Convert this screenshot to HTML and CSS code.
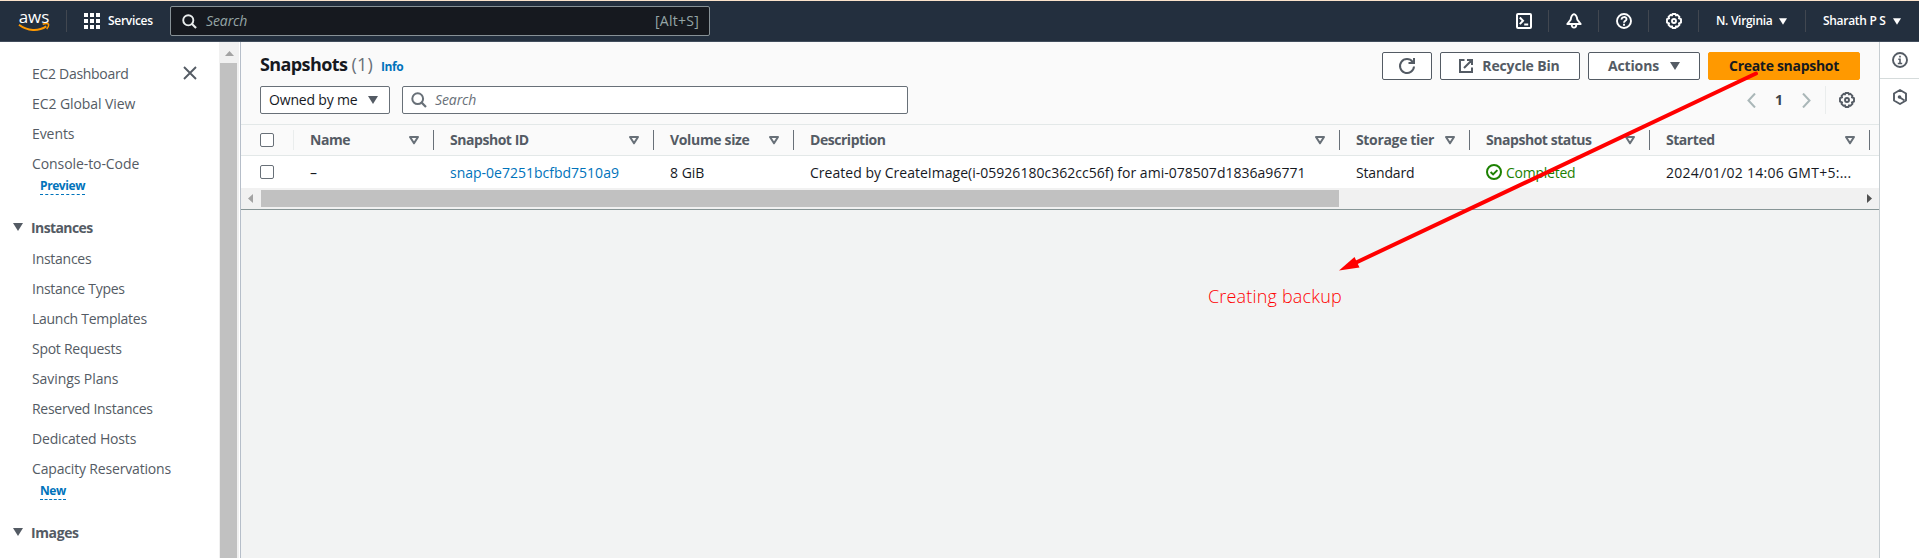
FILE: index.html
```
<!DOCTYPE html>
<html lang="en">
<head>
<meta charset="utf-8">
<title>Snapshots | EC2</title>
<link rel="stylesheet" href="styles.css">
</head>
<body>
<svg width="0" height="0" class="defs">
  <symbol id="gear" viewBox="0 0 16 16"><path d="M6.500 1h3l.5 1.400 1.400-.6 2.100 2.100-.6 1.500 2.100.8v3.400l-2.100.8.6 1.400-2.100 2.100-1.400-.6-.5 1.700h-3L6 13.300l-1.400.6-2.100-2.100.6-1.400L1 9.600V6.200l2.100-.8-.6-1.500 2.100-2.100 1.400.6z" fill="none" stroke="currentColor" stroke-width="1.900" stroke-linejoin="round"/><circle cx="8" cy="8" r="2" fill="none" stroke="currentColor" stroke-width="1.900"/></symbol>
  <symbol id="search" viewBox="0 0 16 16"><circle cx="6.700" cy="6.700" r="5.400" fill="none" stroke="currentColor" stroke-width="2"/><path d="M10.400 10.400l4.600 4.600" stroke="currentColor" stroke-width="2.200"/></symbol>
  <symbol id="caret" viewBox="0 0 10 8"><path d="M0 0h10L5 8z" fill="currentColor"/></symbol>
  <symbol id="sort" viewBox="0 0 10 9"><path d="M1 1h8L5 7.300z" fill="none" stroke="currentColor" stroke-width="2" stroke-linejoin="round"/></symbol>
</svg>

<header class="topbar">
  <div class="aws">
    <span class="aws-word">aws</span>
    <svg class="aws-smile" width="32" height="9" viewBox="0 0 32 9"><path d="M1 1.800C9.500 8.300 20.500 8.600 28.300 3.400" fill="none" stroke="#f90" stroke-width="2"/><path d="M24.700 1.300C27 .4 29.600.4 30.500 1.100 30.900 2.500 30 4.600 28.700 6" fill="none" stroke="#f90" stroke-width="1.500"/></svg>
  </div>
  <i class="bar"></i>
  <svg class="grid" width="16" height="16" viewBox="0 0 16 16"><path fill="#fff" d="M0 0h4v4H0zM6 0h4v4H6zM12 0h4v4h-4zM0 6h4v4H0zM6 6h4v4H6zM12 6h4v4h-4zM0 12h4v4H0zM6 12h4v4H6zM12 12h4v4h-4z"/></svg>
  <span class="services">Services</span>
  <div class="global-search">
    <svg width="15" height="15"><use href="#search"/></svg>
    <em>Search</em><span>[Alt+S]</span>
  </div>
  <nav class="tools">
    <span class="tool"><svg width="16" height="16" viewBox="0 0 16 16" fill="none" stroke="#fff" stroke-width="2"><rect x="1" y="1" width="14" height="14" rx="1"/><path d="M3.800 4.500L7 7.800l-3.200 3.300M8.200 11.600h4"/></svg></span>
    <span class="tool"><svg width="16" height="16" viewBox="0 0 16 16" fill="none" stroke="#fff" stroke-width="1.900" stroke-linejoin="round"><path d="M8 1.200C5.800 2 5 3.600 4.700 6.600L1.300 11h13.400l-3.400-4.400C11 3.600 10.200 2 8 1.200zM5.700 11.500c0 4.200 4.600 4.200 4.600 0"/></svg></span>
    <span class="tool"><svg width="16" height="16" viewBox="0 0 16 16" fill="none" stroke="#fff" stroke-width="1.900"><circle cx="8" cy="8" r="7"/><path d="M5.600 6.600C5.400 3.300 10.600 3.300 10.500 6.200 10.400 7.900 8 7.700 8 9.800M8 10.800v1.900"/></svg></span>
    <span class="tool"><svg width="16" height="16"><use href="#gear"/></svg></span>
    <span class="menu region">N. Virginia<svg width="8" height="7"><use href="#caret"/></svg></span>
    <span class="menu user">Sharath P S<svg width="8" height="7"><use href="#caret"/></svg></span>
  </nav>
</header>

<div class="shell">
  <aside class="side">
    <svg class="close" width="14" height="14" viewBox="0 0 14 14"><path d="M1 1l12 12M13 1L1 13" stroke="#545b64" stroke-width="1.900"/></svg>
    <ul>
      <li class="n1">EC2 Dashboard</li><li class="n0">EC2 Global View</li><li class="n0">Events</li><li class="n0">Console-to-Code</li>
    </ul>
    <span class="tag">Preview</span>
    <h3><svg width="10" height="8"><use href="#caret"/></svg>Instances</h3>
    <ul>
      <li>Instances</li><li>Instance Types</li><li>Launch Templates</li><li>Spot Requests</li><li class="n0">Savings Plans</li><li>Reserved Instances</li><li class="n2">Dedicated Hosts</li><li class="n2">Capacity Reservations</li>
    </ul>
    <span class="tag">New</span>
    <h3 class="images"><svg width="10" height="8"><use href="#caret"/></svg>Images</h3>
  </aside>
  <div class="vscroll"><svg width="9" height="5" viewBox="0 0 9 5"><path d="M0 5h9L4.500 0z" fill="#a3a3a3"/></svg><div class="vthumb"></div></div>

  <main class="main">
    <section class="panel">
      <div class="head">
        <h1>Snapshots <span>(1)</span></h1><a class="info">Info</a>
        <div class="actions">
          <button class="btn refresh"><svg width="18" height="18" viewBox="0 0 18 18" fill="none" stroke="#545b64" stroke-width="2"><path d="M16 9.500A7 7 0 1 1 14.600 4.800M16 1v5h-5.500"/></svg></button>
          <button class="btn bin"><svg width="14" height="14" viewBox="0 0 14 14" fill="none" stroke="#545b64" stroke-width="2"><path d="M5.500 1H1v12h12V8.500M8 1h5v5M13 1L5 9"/></svg>Recycle Bin</button>
          <button class="btn act">Actions<svg width="10" height="8"><use href="#caret"/></svg></button>
          <button class="btn create">Create snapshot</button>
        </div>
      </div>
      <div class="filters">
        <div class="select">Owned by me<svg width="10" height="8"><use href="#caret"/></svg></div>
        <div class="search"><svg width="16" height="16"><use href="#search"/></svg><em>Search</em></div>
        <div class="pager">
          <svg width="9" height="15" viewBox="0 0 9 15"><path d="M8 .5L1.500 7.500 8 14.500" fill="none" stroke="#aab7b8" stroke-width="2"/></svg>
          <b>1</b>
          <svg width="9" height="15" viewBox="0 0 9 15"><path d="M1 .5l6.500 7-6.500 7" fill="none" stroke="#aab7b8" stroke-width="2"/></svg>
          <i></i>
          <svg width="16" height="16"><use href="#gear"/></svg>
        </div>
      </div>
      <div class="row thead">
        <div class="check"><span></span></div>
        <div class="th">Name<svg width="10" height="9"><use href="#sort"/></svg></div>
        <div class="th">Snapshot ID<svg width="10" height="9"><use href="#sort"/></svg></div>
        <div class="th wide">Volume size<svg width="10" height="9"><use href="#sort"/></svg></div>
        <div class="th">Description<svg width="10" height="9"><use href="#sort"/></svg></div>
        <div class="th wide">Storage tier<svg width="10" height="9"><use href="#sort"/></svg></div>
        <div class="th">Snapshot status<svg width="10" height="9"><use href="#sort"/></svg></div>
        <div class="th">Started<svg width="10" height="9"><use href="#sort"/></svg></div>
      </div>
      <div class="row tbody">
        <div class="check"><span></span></div>
        <div>–</div>
        <div><a>snap-0e7251bcfbd7510a9</a></div>
        <div>8 GiB</div>
        <div class="desc">Created by CreateImage(i-05926180c362cc56f) for ami-078507d1836a96771</div>
        <div class="n1">Standard</div>
        <div class="ok"><svg width="16" height="16" viewBox="0 0 16 16" fill="none" stroke="#1d8102" stroke-width="2"><circle cx="8" cy="8" r="7"/><path d="M4.600 8l2.500 2.400 4.300-4.300"/></svg>Completed</div>
        <div class="date">2024/01/02 14:06 GMT+5:...</div>
      </div>
      <div class="hscroll">
        <svg width="5" height="9" viewBox="0 0 5 9"><path d="M5 0v9L0 4.500z" fill="#a3a3a3"/></svg>
        <div class="hthumb"></div>
        <svg class="right" width="5" height="9" viewBox="0 0 5 9"><path d="M0 0v9l5-4.500z" fill="#505050"/></svg>
      </div>
    </section>
  </main>

  <aside class="rail">
    <div><svg width="16" height="16" viewBox="0 0 16 16" fill="none" stroke="#545b64" stroke-width="1.900"><circle cx="8" cy="8" r="7"/><path d="M8 3.700v1.900M6.300 7.300H8v4M5.800 11.500h4.400" stroke-width="1.600"/></svg></div>
    <div><svg width="16" height="16" viewBox="0 0 16 16" fill="none" stroke="#545b64" stroke-width="1.900" stroke-linejoin="round"><path d="M8 1l6 3.500v7L8 15l-6-3.500v-7z"/><circle cx="7.500" cy="8" r="1.800" fill="#545b64" stroke="none"/><path d="M8 8.500l4.500 3"/></svg></div>
  </aside>
</div>

<div class="note">Creating backup</div>
<svg class="arrow" width="1919" height="558" viewBox="0 0 1919 558"><path d="M1756 73.500L1353 264" stroke="#f00" stroke-width="4" stroke-linecap="round"/><path d="M1339 270.500l15.500-13.500 5 10.500z" fill="#f00"/></svg>
</body>
</html>
```
FILE: styles.css
```
* { box-sizing: border-box; }
body {
  margin: 0; width: 1919px; height: 558px; overflow: hidden; position: relative;
  font: 14px/20px "Open Sans", "Noto Sans", sans-serif; color: #16191f; background: #f2f3f3;
}
svg { display: block; flex: none; }
.defs { position: absolute; }
ul, h1, h3 { margin: 0; padding: 0; list-style: none; }

.topbar {
  height: 42px; display: flex; align-items: center; color: #fff; background: #232f3e;
  border-top: 1px solid #fbe3cb; border-bottom: 1px solid #414d5c;
  font-size: 12px; font-weight: 600; padding-left: 18px;
}
.aws { width: 32px; display: flex; flex-direction: column; align-items: center; }
.aws-word { font-size: 17px; font-weight: 500; line-height: 12px; letter-spacing: 0; height: 13px; }
.aws-smile { margin-top: -1px; }
.bar { width: 1px; height: 22px; background: #414750; margin-left: 16px; }
.grid { margin-left: 17px; }
.services { width: 70px; padding-left: 8px; letter-spacing: -.3px; }
.global-search {
  width: 540px; height: 30px; display: flex; align-items: center; padding: 0 10px 0 11px;
  background: #16191f; border: 1px solid #879196; border-radius: 2px; color: #95a5a6;
  font-size: 14px; font-weight: 400;
}
.global-search svg { color: #eaeded; }
.global-search em { flex: 1; padding-left: 9px; letter-spacing: -.1px; }
.global-search span { letter-spacing: .25px; }
.tools { margin-left: auto; display: flex; align-items: center; }
.tool { width: 50px; height: 22px; display: flex; align-items: center; justify-content: center; border-right: 1px solid #414750; }
.menu { display: flex; align-items: center; height: 22px; letter-spacing: -.3px; }
.menu svg { margin-left: auto; }
.region { width: 107px; padding: 0 18px 0 17px; border-right: 1px solid #414750; }
.user { width: 113px; padding: 0 18px 0 17px; }

.shell { display: flex; height: 516px; }
.side { width: 219px; background: #fff; color: #545b64; padding-top: 16px; position: relative; }
.side li { height: 30px; line-height: 31px; padding-left: 32px; letter-spacing: -.27px; }
.side li.n1 { letter-spacing: -.3px; }
.side li.n0 { letter-spacing: -.08px; }
.side li.n2 { letter-spacing: -.17px; }
.close { position: absolute; left: 183px; top: 24px; }
.tag {
  display: block; width: fit-content; height: 17px; margin: 0 0 0 40px; font-size: 12px; line-height: 16px;
  font-weight: 700; letter-spacing: -.4px; color: #0073bb; border-bottom: 1px dashed #0073bb;
}
.side h3 { display: flex; align-items: center; gap: 8px; height: 20px; margin: 22px 0 6px; padding-left: 13px; font-size: 14px; line-height: 21px; letter-spacing: -.6px; }
.side h3.images { letter-spacing: -.4px; }
.vscroll { width: 21px; background: #f1f1f1; border-right: 1px solid #fff; display: flex; flex-direction: column; align-items: center; padding-top: 9px; }
.vthumb { width: 17px; flex: 1; margin: 7px 1px 0 0; background: #c1c1c1; }

.main { width: 1639px; border-left: 1px solid #b6bec9; }
.panel { background: #fafafa; border-bottom: 1px solid #879596; }
.head { display: flex; height: 44px; padding: 10px 19px 0 19px; }
h1 { font-size: 18px; line-height: 28px; height: 28px; margin-top: -2px; letter-spacing: -.6px; }
h1 span { font-weight: 400; color: #687078; letter-spacing: .2px; }
.info { font-size: 12px; font-weight: 700; color: #0073bb; margin-left: 8px; line-height: 29px; letter-spacing: -.4px; }
.actions { display: flex; gap: 8px; margin-left: auto; }
.btn {
  height: 28px; display: flex; align-items: center; justify-content: center; padding: 0;
  font: 700 14px/20px "Open Sans", "Noto Sans", sans-serif; color: #545b64; background: #fff;
  border: 1px solid #545b64; border-radius: 2px; letter-spacing: -.15px;
}
.refresh { width: 50px; }
.bin { width: 140px; gap: 9px; padding-right: 1px; }
.act { width: 112px; gap: 11px; }
.create { width: 152px; background: #f90; border-color: #f90; color: #16191f; letter-spacing: -.3px; }
.filters { display: flex; align-items: center; height: 28px; padding-left: 19px; }
.select { width: 130px; height: 28px; display: flex; align-items: center; justify-content: space-between; padding: 0 11px 0 8px; background: #fff; border: 1px solid #687078; border-radius: 2px; letter-spacing: -.18px; }
.select svg { color: #545b64; }
.search { width: 506px; height: 28px; margin-left: 12px; display: flex; align-items: center; gap: 8px; padding-left: 8px; background: #fff; border: 1px solid #687078; border-radius: 2px; color: #687078; }
.search em { letter-spacing: -.1px; }
.pager { display: flex; align-items: center; margin-left: auto; padding-right: 24px; color: #545b64; }
.pager b { width: 46px; text-align: center; color: #3c434b; }
.pager i { width: 1px; height: 28px; background: #eaeded; margin: 0 13px 0 14px; }
.row { display: grid; grid-template-columns: 53px 140px 220px 140px 546px 130px 180px 220px; align-items: center; }
.row > div { padding-left: 16px; white-space: nowrap; }
.thead { height: 32px; margin-top: 10px; border-top: 1px solid #e3e8e8; border-bottom: 1px solid #e3e8e8; color: #545b64; font-weight: 700; }
.row > .check { padding-left: 19px; height: 20px; display: flex; align-items: center; }
.thead > .check { border-right: 1px solid #eaeded; }
.check span { width: 14px; height: 14px; border: 1px solid #687078; border-radius: 2px; background: #fff; }
.th { height: 20px; display: flex; align-items: center; justify-content: space-between; padding-right: 14px; border-right: 1px solid #687078; letter-spacing: -.46px; }
.th.wide { letter-spacing: -.34px; }
.th svg { color: #687078; }
.tbody { height: 32px; line-height: 21px; background: #fff; }
.tbody a { color: #0073bb; }
.tbody .desc { letter-spacing: .02px; }
.tbody .n1 { letter-spacing: -.15px; }
.tbody .ok { display: flex; align-items: center; gap: 4px; color: #1d8102; letter-spacing: -.25px; }
.tbody .date { letter-spacing: .27px; }
.hscroll { height: 21px; display: flex; align-items: center; background: #f1f1f1; padding-left: 7px; }
.hthumb { width: 1078px; height: 17px; margin-left: 8px; background: #c1c1c1; }
.hscroll .right { margin-left: auto; margin-right: 7px; }

.rail { width: 40px; background: #fff; border-left: 1px solid #c6cdd1; }
.rail div { height: 37px; display: flex; align-items: center; justify-content: center; border-bottom: 1px solid #d5dbdb; }
.rail div + div { height: 36px; border: 0; }

.note { position: absolute; left: 1208px; top: 284px; font-size: 18px; line-height: 25px; letter-spacing: .18px; color: #f00; font-weight: 300; }
.arrow { position: absolute; left: 0; top: 0; }
```
